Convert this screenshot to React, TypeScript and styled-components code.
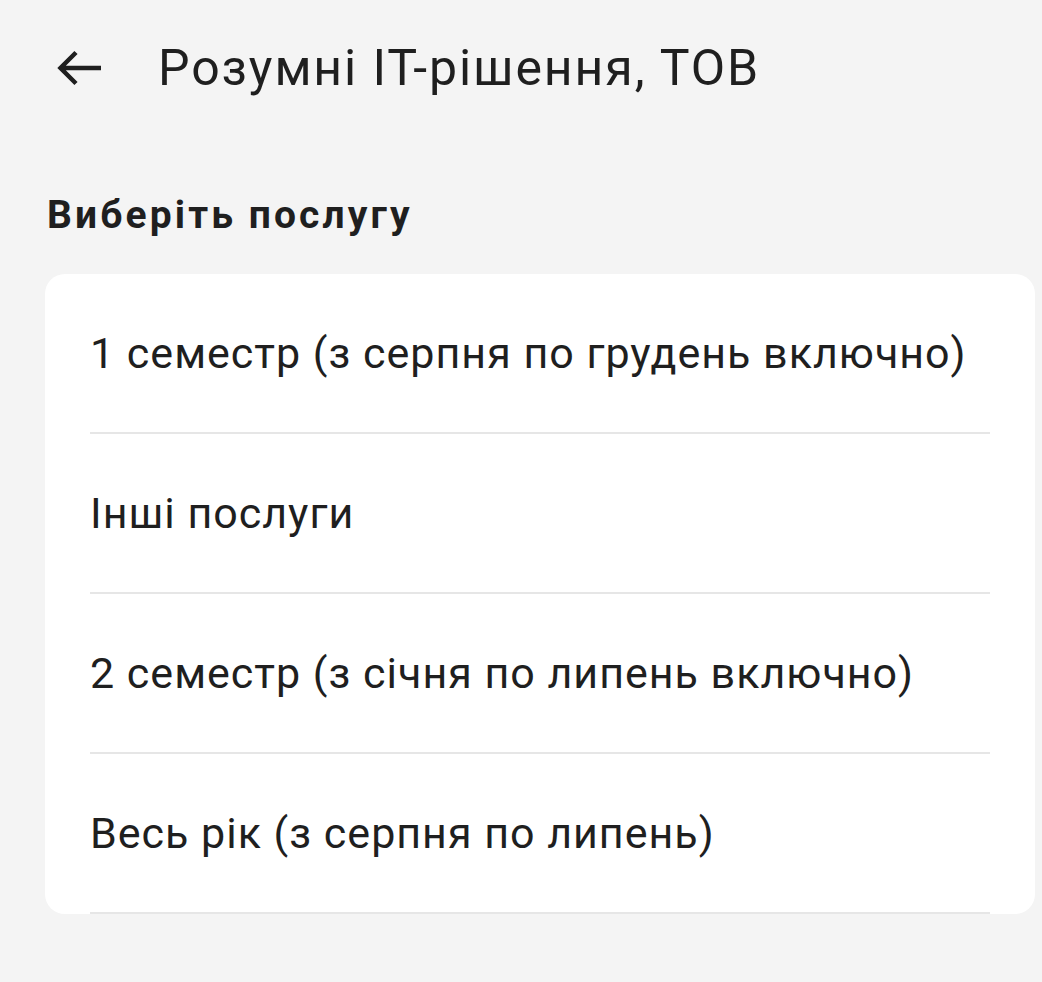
import React from "react";
import styled, { createGlobalStyle } from "styled-components";

const GlobalStyle = createGlobalStyle`
  html, body {
    margin: 0;
    padding: 0;
    background: #f4f4f4;
  }
  body {
    font-family: Roboto, "Noto Sans", "Liberation Sans", sans-serif;
    color: #1f1f1f;
  }
`;

const Page = styled.div`
  min-height: 982px;
  background: #f4f4f4;
  padding: 0 7px 0 45px;
  box-sizing: border-box;
`;

const Header = styled.header`
  display: flex;
  align-items: center;
  height: 136px;
  padding-left: 12px;
  gap: 57px;
`;

const BackButton = styled.button`
  display: flex;
  align-items: center;
  justify-content: center;
  padding: 0;
  border: none;
  background: none;
  color: #1f1f1f;
  cursor: pointer;
`;

const Title = styled.h1`
  margin: 0;
  font-size: 50px;
  font-weight: 400;
  letter-spacing: 1.9px;
  color: #1f1f1f;
`;

const SectionTitle = styled.h2`
  margin: 56px 0 35px 2px;
  font-size: 39px;
  font-weight: 700;
  line-height: 1.2;
  letter-spacing: 3.1px;
  color: #1f1f1f;
`;

const Card = styled.ul`
  list-style: none;
  margin: 0;
  padding: 0;
  background: #ffffff;
  border-radius: 20px;
  overflow: hidden;
`;

const Row = styled.li`
  display: flex;
  align-items: center;
  height: 160px;
  margin: 0 45px;
  box-sizing: border-box;
  border-bottom: 2px solid #e6e6e6;
  font-size: 43px;
  letter-spacing: 1px;
  color: #1f1f1f;
  cursor: pointer;
`;

const services = [
  "1 семестр (з серпня по грудень включно)",
  "Інші послуги",
  "2 семестр (з січня по липень включно)",
  "Весь рік (з серпня по липень)",
];

const App: React.FC = () => {
  return (
    <Page>
      <GlobalStyle />
      <Header>
        <BackButton aria-label="Назад">
          <svg width="44" height="36" viewBox="0 0 44 36" fill="none">
            <path
              d="M44 18H4M19 2.5L3.5 18 19 33.5"
              stroke="currentColor"
              strokeWidth="4.5"
            />
          </svg>
        </BackButton>
        <Title>Розумні IT-рішення, ТОВ</Title>
      </Header>
      <SectionTitle>Виберіть послугу</SectionTitle>
      <Card>
        {services.map((s) => (
          <Row key={s}>{s}</Row>
        ))}
      </Card>
    </Page>
  );
};

export default App;
